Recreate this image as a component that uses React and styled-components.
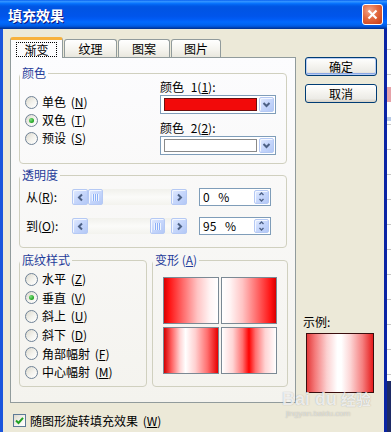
import styled, { createGlobalStyle, css } from "styled-components";

const FONT = `"Noto Sans CJK SC", "Liberation Sans", sans-serif`;

const GlobalStyle = createGlobalStyle`
  html, body { margin: 0; padding: 0; }
  body {
    width: 391px;
    height: 432px;
    overflow: hidden;
    background: #fff;
    font-family: ${FONT};
    font-size: 12px;
    color: #000;
  }
  * { box-sizing: border-box; }
`;

const Screen = styled.div`
  position: relative;
  display: flex;
  width: 391px;
  height: 432px;
  overflow: hidden;
`;

const Dialog = styled.div`
  flex: none;
  width: 387px;
  display: flex;
  flex-direction: column;
`;

const TitleBar = styled.div`
  flex: none;
  height: 29px;
  display: flex;
  align-items: center;
  justify-content: space-between;
  padding: 0 4px 0 8px;
  background: linear-gradient(
    180deg,
    #0058ee 0%,
    #3593ff 4%,
    #288eff 7%,
    #127dff 10%,
    #036ffc 13%,
    #0262ee 17%,
    #0057e5 22%,
    #0054e3 28%,
    #0055eb 56%,
    #005bf5 66%,
    #026afe 76%,
    #0062ef 86%,
    #0052d6 92%,
    #0040ab 96%,
    #003092 100%
  );
`;

const Title = styled.span`
  color: #fff;
  font-size: 14px;
  font-weight: bold;
  line-height: 16px;
  text-shadow: 1px 1px 0 #0a1883;
`;

const CloseButton = styled.div`
  width: 21px;
  height: 21px;
  border: 1px solid #fff;
  border-radius: 3px;
  display: flex;
  align-items: center;
  justify-content: center;
  background: radial-gradient(circle at 35% 30%, #f3a68c 0%, #e2693f 45%, #c63a14 100%);
`;

const Frame = styled.div`
  flex: 1;
  display: flex;
  flex-direction: column;
  background: #ece9d8;
  border-left: 3px solid #1a55dc;
  border-right: 3px solid #0a24a4;
  padding: 8px 7px 0;
`;

const MainRow = styled.div`
  display: flex;
  align-items: stretch;
`;

const TabsArea = styled.div`
  width: 286px;
  display: flex;
  flex-direction: column;
`;

const TabStrip = styled.div`
  position: relative;
  z-index: 1;
  height: 20px;
  display: flex;
  align-items: flex-end;
`;

const Tab = styled.div`
  width: ${(p) => p.$w}px;
  height: ${(p) => (p.$active ? 21 : 18)}px;
  margin-left: ${(p) => (p.$active ? 0 : 1)}px;
  margin-bottom: ${(p) => (p.$active ? -1 : 0)}px;
  display: flex;
  align-items: center;
  justify-content: center;
  border: 1px solid #919b9c;
  border-bottom: none;
  border-radius: 3px 3px 0 0;
  background: linear-gradient(180deg, #ffffff 0%, #f5f4ef 55%, #e9e7de 100%);
  ${(p) =>
    p.$active &&
    css`
      border-top: 3px solid #f7b13c;
      background: #fcfcfe;
    `}
`;

const TabText = styled.span`
  line-height: 13px;
  padding: 0 7px;
  border: 1px dotted ${(p) => (p.$focus ? "#000" : "transparent")};
`;

const Panel = styled.div`
  border: 1px solid #919b9c;
  background: linear-gradient(180deg, #fcfcfe 0%, #f4f3ee 100%);
  padding: 8px 8px 15px;
  display: flex;
  flex-direction: column;
`;

const Group = styled.fieldset`
  margin: 0;
  margin-top: ${(p) => p.$gap || 0}px;
  padding: 0;
  min-width: 0;
  height: ${(p) => p.$h}px;
  border: 1px solid #d0d0bf;
  border-radius: 4px;
`;

const Legend = styled.legend`
  margin-left: 0;
  padding: 0 2px;
  line-height: 14px;
  font-size: 12px;
  color: #1f3c9a;
`;

const Key = styled.span`
  text-decoration: underline;
`;

const ColorsContent = styled.div`
  display: flex;
  padding-left: 5px;
`;

const RadioList = styled.div`
  width: ${(p) => p.$w}px;
  padding-top: ${(p) => p.$top}px;
  padding-left: ${(p) => p.$left || 0}px;
  display: flex;
  flex-direction: column;
`;

const Option = styled.div`
  height: ${(p) => p.$h}px;
  display: flex;
  align-items: center;
  gap: 4px;
  line-height: 14px;
  white-space: nowrap;
  word-spacing: 2px;
`;

const RadioCircle = styled.span`
  flex: none;
  width: 13px;
  height: 13px;
  border-radius: 50%;
  border: 1px solid #6f8296;
  background: linear-gradient(135deg, #dcd9cd 0%, #f4f3ee 55%, #ffffff 100%);
  display: flex;
  align-items: center;
  justify-content: center;
`;

const RadioDot = styled.span`
  width: 5px;
  height: 5px;
  border-radius: 50%;
  background: radial-gradient(circle at 35% 35%, #7be07f 0%, #21a121 70%, #1a8a1a 100%);
`;

const ColorCol = styled.div`
  width: 116px;
  display: flex;
  flex-direction: column;
`;

const FieldLabel = styled.div`
  line-height: 14px;
  margin-top: ${(p) => p.$gap || 0}px;
  word-spacing: 4px;
`;

const ColorCombo = styled.div`
  margin-top: 1px;
  height: 19px;
  display: flex;
  align-items: center;
  gap: 2px;
  padding: 1px 1px 1px 3px;
  border: 1px solid #7f9db9;
  background: #fff;
`;

const ColorSwatch = styled.div`
  flex: 1;
  height: 13px;
  background: ${(p) => p.$color};
  border: 1px solid ${(p) => (p.$color === "#fff" ? "#8a8a8a" : "#6b1010")};
`;

const xpBlue = css`
  display: flex;
  align-items: center;
  justify-content: center;
  border: 1px solid #b5c9f4;
  border-radius: 2px;
  background: linear-gradient(135deg, #e2ebfe 0%, #c8d8fc 45%, #b3c8f6 100%);
  box-shadow: inset 1px 1px 0 #f3f7ff;
`;

const DropButton = styled.div`
  ${xpBlue};
  flex: none;
  width: 15px;
  height: 15px;
`;

const TransContent = styled.div`
  display: flex;
  flex-direction: column;
  gap: 11px;
  padding: 6px 0 0 6px;
`;

const SlideRow = styled.div`
  height: 18px;
  display: flex;
  align-items: center;
`;

const RowLabel = styled.span`
  width: 46px;
  line-height: 14px;
`;

const ScrollBar = styled.div`
  width: 115px;
  height: 16px;
  margin-right: 12px;
  display: flex;
  background: linear-gradient(180deg, #f1f1ec 0%, #fbfbf9 50%, #f3f3ee 100%);
`;

const ScrollButton = styled.div`
  ${xpBlue};
  flex: none;
  width: 16px;
  height: 16px;
`;

const Track = styled.div`
  flex: 1;
  display: flex;
`;

const Thumb = styled.div`
  ${xpBlue};
  width: 15px;
  height: 16px;
`;

const Grip = styled.span`
  width: 7px;
  height: 7px;
  background: repeating-linear-gradient(90deg, #eef4fe 0 1px, #8cb0f8 1px 2px);
`;

const SpinBox = styled.div`
  width: 72px;
  height: 18px;
  display: flex;
  align-items: center;
  justify-content: space-between;
  padding: 0 1px 0 3px;
  border: 1px solid #7f9db9;
  background: #fff;
  line-height: 14px;
  word-spacing: 6px;
`;

const SpinButton = styled.div`
  ${xpBlue};
  flex-direction: column;
  width: 15px;
  height: 14px;
`;

const BottomRow = styled.div`
  margin-top: 5px;
  display: grid;
  grid-template-columns: 128px 136px;
  column-gap: 5px;
`;

const VariantGrid = styled.div`
  padding: 10px 0 0 10px;
  display: grid;
  grid-template-columns: 56px 56px;
  grid-template-rows: 47px 47px;
  column-gap: 2px;
  row-gap: 3px;
`;

const Variant = styled.div`
  border: 1px solid #7b8994;
  background: ${(p) => p.$fill};
`;

const SideColumn = styled.div`
  width: 74px;
  margin-left: 7px;
  display: flex;
  flex-direction: column;
  padding: 20px 0 10px;
`;

const PushButton = styled.div`
  width: 72px;
  height: 19px;
  margin: ${(p) => p.$top || 0}px 0 0 2px;
  display: flex;
  align-items: center;
  justify-content: center;
  border: 1px solid #003c74;
  border-radius: 3px;
  background: linear-gradient(180deg, #ffffff 0%, #f6f5f1 40%, #ecebe6 80%, #d6d0c5 100%);
  line-height: 14px;
  ${(p) =>
    p.$default &&
    css`
      box-shadow: inset 0 0 0 1px #b9cdf4, inset 0 -1px 0 1px #8aa8e6;
    `}
`;

const SampleBlock = styled.div`
  margin-top: auto;
  display: flex;
  flex-direction: column;
`;

const SampleLabel = styled.div`
  line-height: 14px;
`;

const SampleBox = styled.div`
  margin: 4px 0 0 3px;
  width: 68px;
  height: 60px;
  border: 1px solid #3a0e0e;
  background: linear-gradient(
    90deg,
    #e43a3a 0%,
    #f47a7a 12%,
    #fbd0d0 30%,
    #ffffff 46%,
    #ffffff 52%,
    #fcd4d4 66%,
    #f58080 84%,
    #e61c1c 100%
  );
`;

const CheckRow = styled.div`
  margin-top: 11px;
  padding-left: 3px;
  display: flex;
  align-items: center;
  gap: 4px;
  height: 13px;
  line-height: 14px;
  word-spacing: 2px;
`;

const CheckBox = styled.span`
  width: 13px;
  height: 13px;
  border: 1px solid #5d7a96;
  background: linear-gradient(135deg, #dcd9cd 0%, #f6f5f1 60%, #fff 100%);
  display: flex;
  align-items: center;
  justify-content: center;
`;

const Backdrop = styled.div`
  flex: 1;
  background:
    linear-gradient(180deg, transparent 381px, #1d2a66 381px),
    linear-gradient(180deg, transparent 87px, #e6a2aa 87px, #e6a2aa 102px, transparent 102px),
    linear-gradient(180deg, transparent 117px, #b8cbe8 117px, #b8cbe8 121px, transparent 121px),
    repeating-linear-gradient(180deg, #ffffff 0 24px, #c8c8c8 24px 25px);
`;

const Watermark = styled.div`
  position: absolute;
  left: 282px;
  top: 389px;
  display: flex;
  flex-direction: column;
  color: rgba(255, 255, 255, 0.8);
  text-shadow: 0 0 1px rgba(90, 90, 90, 0.5);
  pointer-events: none;
`;

const MarkMain = styled.span`
  font-family: "Liberation Sans", sans-serif;
  font-size: 18px;
  font-weight: bold;
  line-height: 20px;
  white-space: nowrap;
`;

const MarkCn = styled.span`
  font-family: ${FONT};
  font-size: 15px;
  margin-left: 4px;
`;

const MarkSub = styled.span`
  font-family: "Liberation Sans", sans-serif;
  font-size: 8px;
  line-height: 10px;
  margin-left: 4px;
  color: rgba(255, 255, 255, 0.55);
`;

const Chevron = ({ dir, size = 9 }) => {
  const d = {
    down: "M1.5 3 L4.5 6 L7.5 3",
    up: "M1.5 6 L4.5 3 L7.5 6",
    left: "M6 1.5 L3 4.5 L6 7.5",
    right: "M3 1.5 L6 4.5 L3 7.5",
  }[dir];
  return (
    <svg width={size} height={size} viewBox="0 0 9 9">
      <path d={d} fill="none" stroke="#4d6185" strokeWidth="2" />
    </svg>
  );
};

const Radio = ({ checked, h = 18, children }) => (
  <Option $h={h}>
    <RadioCircle>{checked && <RadioDot />}</RadioCircle>
    <span>{children}</span>
  </Option>
);

const Slider = ({ label, k, value }) => (
  <SlideRow>
    <RowLabel>
      {label}(<Key>{k}</Key>):
    </RowLabel>
    <ScrollBar>
      <ScrollButton>
        <Chevron dir="left" />
      </ScrollButton>
      <Track>
        <Thumb style={{ marginLeft: Math.round(value * 0.65) }}>
          <Grip />
        </Thumb>
      </Track>
      <ScrollButton>
        <Chevron dir="right" />
      </ScrollButton>
    </ScrollBar>
    <SpinBox>
      <span>{value} %</span>
      <SpinButton>
        <Chevron dir="up" size={7} />
        <Chevron dir="down" size={7} />
      </SpinButton>
    </SpinBox>
  </SlideRow>
);

const tabs = [
  { name: "渐变", w: 53 },
  { name: "纹理", w: 53 },
  { name: "图案", w: 52 },
  { name: "图片", w: 50 },
];

const patterns = [
  ["水平", "Z"],
  ["垂直", "V"],
  ["斜上", "U"],
  ["斜下", "D"],
  ["角部幅射", "F"],
  ["中心幅射", "M"],
];

const variants = [
  "linear-gradient(90deg, #d80000 0%, #ff1414 10%, #ff6a6a 35%, #ffc4c4 62%, #fff4f4 85%, #ffffff 100%)",
  "linear-gradient(90deg, #ffffff 0%, #fff4f4 15%, #ffc4c4 38%, #ff6a6a 65%, #ff1414 90%, #d80000 100%)",
  "linear-gradient(90deg, #d40000 0%, #ff6060 14%, #ffd6d6 30%, #ffffff 40%, #ffd0d0 58%, #ff7070 80%, #e80000 100%)",
  "linear-gradient(90deg, #ffffff 0%, #ffd4d4 20%, #ff7070 38%, #ff0000 50%, #ff7070 62%, #ffd4d4 80%, #ffffff 100%)",
];

export default function App() {
  return (
    <>
      <GlobalStyle />
      <Screen>
        <Dialog>
          <TitleBar>
            <Title>填充效果</Title>
            <CloseButton>
              <svg width="11" height="11" viewBox="0 0 11 11">
                <path d="M1.5 1.5 L9.5 9.5 M9.5 1.5 L1.5 9.5" stroke="#fff" strokeWidth="2.2" />
              </svg>
            </CloseButton>
          </TitleBar>
          <Frame>
            <MainRow>
              <TabsArea>
                <TabStrip>
                  {tabs.map((t, i) => (
                    <Tab key={t.name} $w={t.w} $active={i === 0}>
                      <TabText $focus={i === 0}>{t.name}</TabText>
                    </Tab>
                  ))}
                </TabStrip>
                <Panel>
                  <Group $h={98}>
                    <Legend>颜色</Legend>
                    <ColorsContent>
                      <RadioList $w={135} $top={13}>
                        <Radio>
                          单色 (<Key>N</Key>)
                        </Radio>
                        <Radio checked>
                          双色 (<Key>T</Key>)
                        </Radio>
                        <Radio>
                          预设 (<Key>S</Key>)
                        </Radio>
                      </RadioList>
                      <ColorCol>
                        <FieldLabel>
                          颜色 1(<Key>1</Key>):
                        </FieldLabel>
                        <ColorCombo>
                          <ColorSwatch $color="#f20a0a" />
                          <DropButton>
                            <Chevron dir="down" />
                          </DropButton>
                        </ColorCombo>
                        <FieldLabel $gap={7}>
                          颜色 2(<Key>2</Key>):
                        </FieldLabel>
                        <ColorCombo>
                          <ColorSwatch $color="#fff" />
                          <DropButton>
                            <Chevron dir="down" />
                          </DropButton>
                        </ColorCombo>
                      </ColorCol>
                    </ColorsContent>
                  </Group>

                  <Group $h={80} $gap={4}>
                    <Legend>透明度</Legend>
                    <TransContent>
                      <Slider label="从" k="R" value={0} />
                      <Slider label="到" k="O" value={95} />
                    </TransContent>
                  </Group>

                  <BottomRow>
                    <Group $h={134}>
                      <Legend>底纹样式</Legend>
                      <RadioList $w={120} $top={3} $left={5}>
                        {patterns.map(([name, k]) => (
                          <Radio key={k} h={18.6} checked={k === "V"}>
                            {name} (<Key>{k}</Key>)
                          </Radio>
                        ))}
                      </RadioList>
                    </Group>
                    <Group $h={134}>
                      <Legend>
                        变形 (<Key>A</Key>)
                      </Legend>
                      <VariantGrid>
                        {variants.map((v, i) => (
                          <Variant key={i} $fill={v} />
                        ))}
                      </VariantGrid>
                    </Group>
                  </BottomRow>
                </Panel>
              </TabsArea>

              <SideColumn>
                <PushButton $default>确定</PushButton>
                <PushButton $top={8}>取消</PushButton>
                <SampleBlock>
                  <SampleLabel>示例:</SampleLabel>
                  <SampleBox />
                </SampleBlock>
              </SideColumn>
            </MainRow>

            <CheckRow>
              <CheckBox>
                <svg width="9" height="9" viewBox="0 0 9 9">
                  <path d="M1 4.5 L3.5 7 L8 1.8" fill="none" stroke="#21a121" strokeWidth="2" />
                </svg>
              </CheckBox>
              <span>
                随图形旋转填充效果 (<Key>W</Key>)
              </span>
            </CheckRow>
          </Frame>
        </Dialog>
        <Backdrop />
        <Watermark>
          <MarkMain>
            Bai du
            <MarkCn>经验</MarkCn>
          </MarkMain>
          <MarkSub>jingyan.baidu.com</MarkSub>
        </Watermark>
      </Screen>
    </>
  );
}
